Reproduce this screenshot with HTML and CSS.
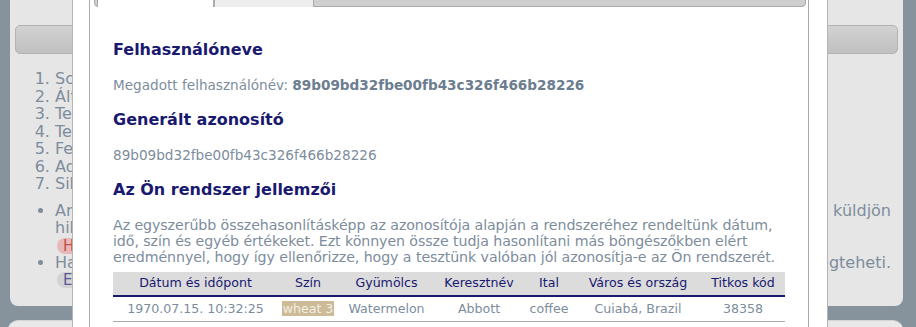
FILE: index.html
```html
<!DOCTYPE html>
<html lang="hu">
<head>
    <meta charset="UTF-8">
    <meta name="viewport" content="width=device-width, initial-scale=1.0">
    <title>Böngésző azonosítás</title>
    <link rel="stylesheet" href="styles.css">
</head>
<body>
    <div class="page">
        <div class="panel">
            <div class="toolbar"></div>

            <ol class="steps">
                <li>Script betöltése</li>
                <li>Általános adatok</li>
                <li>Teszt indítása</li>
                <li>Teszt eredménye</li>
                <li>Felhasználónév megadása</li>
                <li>Adatok mentése</li>
                <li>Sikeres azonosítás</li>
            </ol>

            <ul class="notes">
                <li>
                    <div class="line"><span>Amennyiben a teszt során hibát tapasztal, kérjük</span><span>küldjön</span></div>
                    <div class="line"><span>hibajelentést az alábbi gombbal.</span></div>
                    <div class="line"><span class="pill pill-red">Hibajelentés</span></div>
                </li>
                <li>
                    <div class="line"><span>Ha szeretné újra lefuttatni a tesztet, azt az alábbi gombbal</span><span>megteheti.</span></div>
                    <div class="line"><span class="pill pill-gray">Előröl</span></div>
                </li>
            </ul>
        </div>
        <div class="panel panel-next"></div>
    </div>

    <!-- Result dialog -->
    <div class="dialog">
        <div class="tabs">
            <ul class="tab-nav">
                <li class="tab active">Eredmény</li>
                <li class="tab">Részletek</li>
            </ul>
            <div class="tab-panel">
                <h3>Felhasználóneve</h3>
                <p>Megadott felhasználónév: <b class="value">89b09bd32fbe00fb43c326f466b28226</b></p>

                <h3>Generált azonosító</h3>
                <p>89b09bd32fbe00fb43c326f466b28226</p>

                <h3>Az Ön rendszer jellemzői</h3>
                <p class="intro">Az egyszerűbb összehasonlításképp az azonosítója alapján a rendszeréhez rendeltünk dátum, idő, szín és egyéb értékeket. Ezt könnyen össze tudja hasonlítani más böngészőkben elért eredménnyel, hogy így ellenőrizze, hogy a tesztünk valóban jól azonosítja-e az Ön rendszerét.</p>

                <table class="traits">
                    <colgroup>
                        <col class="col-date">
                        <col class="col-color">
                        <col class="col-fruit">
                        <col class="col-name">
                        <col class="col-drink">
                        <col class="col-city">
                        <col class="col-code">
                    </colgroup>
                    <thead>
                        <tr>
                            <th>Dátum és időpont</th>
                            <th>Szín</th>
                            <th>Gyümölcs</th>
                            <th>Keresztnév</th>
                            <th>Ital</th>
                            <th>Város és ország</th>
                            <th>Titkos kód</th>
                        </tr>
                    </thead>
                    <tbody>
                        <tr>
                            <td>1970.07.15. 10:32:25</td>
                            <td><span class="swatch">wheat 3</span></td>
                            <td>Watermelon</td>
                            <td>Abbott</td>
                            <td>coffee</td>
                            <td>Cuiabá, Brazil</td>
                            <td>38358</td>
                        </tr>
                    </tbody>
                </table>
            </div>
        </div>
    </div>
</body>
</html>
```

FILE: styles.css
```css
body {
    margin: 0;
    height: 327px;
    overflow: hidden;
    background-color: #86929c;
    font-family: "DejaVu Sans", Verdana, sans-serif;
    color: #7d8d9c;
}
.page {
    padding: 0 13px 0 10px;
}
.panel {
    background-color: #e6e6e6;
    border-radius: 0 0 8px 8px;
    height: 306px;
    padding: 25px 5px 0 5px;
    box-sizing: border-box;
}
.panel-next {
    margin: 14px 0 0 -2px;
    border-radius: 10px 10px 0 0;
    border-top: 1px solid #d4d4d4;
    background-color: #e9e9e9;
    height: 40px;
}
.toolbar {
    height: 29px;
    box-sizing: border-box;
    border: 1px solid #b3b3b3;
    border-radius: 5px;
    background: linear-gradient(#d2d2d2, #c0c0c0);
}
.steps {
    margin: 16px 0 0 0;
    padding-left: 40px;
    font-size: 16px;
    line-height: 17.5px;
}
.notes {
    margin: 9px 0 0 0;
    padding-left: 40px;
    font-size: 16px;
    line-height: 17.5px;
}
.notes .line {
    display: flex;
    justify-content: space-between;
    padding-right: 7px;
}
.pill {
    display: inline-block;
    margin: 1px 0 0 2px;
    padding: 0 8px 0 6px;
    border-radius: 8px;
    font-size: 15px;
    line-height: 16px;
}
.pill-red {
    background-color: #e8b9bb;
    color: #c0504d;
}
.pill-gray {
    background-color: #d3d3d3;
    color: #5a5a9a;
}

/* dialog */
.dialog {
    position: absolute;
    left: 72px;
    top: -40px;
    width: 756px;
    height: 400px;
    box-sizing: border-box;
    padding: 10px 18px 0 16px;
    background-color: #fff;
    border: 1px solid #b4b4b4;
}
.tabs {
    height: 100%;
    border: 1px solid #aaa;
    padding: 3px 2px 0 4px;
}
.tab-nav {
    display: flex;
    margin: 0;
    padding: 0 0 0 2px;
    height: 30px;
    list-style: none;
    background-color: #cfcfcf;
    border: 1px solid #aaa;
    border-radius: 4px;
}
.tab {
    align-self: flex-end;
    height: 26px;
    box-sizing: border-box;
    margin-bottom: -1px;
    padding: 1px 10px 0;
    border: 1px solid #aaa;
    border-bottom: none;
    background-color: #eee;
    color: #555;
    font-size: 13px;
    line-height: 15px;
    width: 100px;
}
.tab.active {
    width: 117px;
    background-color: #fff;
    height: 27px;
}
.tab-panel {
    padding: 33px 21px 0 19px;
}
h3 {
    margin: 0 0 16.5px 0;
    font-size: 16px;
    line-height: 20px;
    color: #191970;
}
p {
    margin: 0 0 17px 0;
    font-size: 13.6px;
    line-height: 16.5px;
}
.value {
    color: #6b7d8f;
}
.intro {
    margin: 1px 0 6.5px 0;
    font-size: 14.2px;
    letter-spacing: -0.08px;
    line-height: 16.3px;
}
.traits {
    width: 100%;
    border-collapse: collapse;
    font-size: 12.6px;
    line-height: 16.5px;
}
.col-date { width: 165px; }
.col-color { width: 60px; }
.col-fruit { width: 97px; }
.col-name { width: 88px; }
.col-drink { width: 52px; }
.col-city { width: 126px; }
.col-code { width: 84px; }
.traits th {
    background-color: #dcdcdc;
    color: #191970;
    font-weight: normal;
    padding: 3.5px 2px;
    border-bottom: 2px solid #191970;
    white-space: nowrap;
}
.traits td {
    text-align: center;
    padding: 3.5px 2px;
    border-bottom: 1px solid #aaa;
    white-space: nowrap;
}
.swatch {
    background-color: #cdba96;
    color: #f4efe4;
    padding: 0 1px;
}
```
